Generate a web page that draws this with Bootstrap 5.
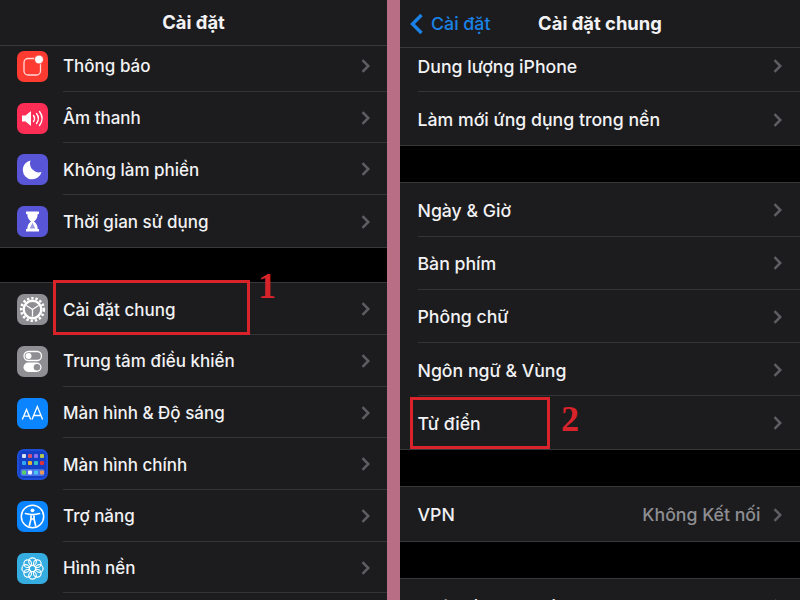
<!DOCTYPE html>
<html lang="vi">
<head>
    <meta charset="UTF-8">
    <title>Cài đặt</title>
    <link rel="stylesheet" href="https://cdn.jsdelivr.net/npm/bootstrap@5.3.0/dist/css/bootstrap.min.css">
    <style>
        html, body { width: 800px; height: 600px; overflow: hidden; background: #000; }
        body { font-family: Inter, "Liberation Sans", sans-serif; font-size: 17px; font-weight: 450; color: #f2f2f4; }
        .screen { width: 800px; height: 600px; position: relative; overflow: hidden; }
        .pane-left { width: 387px; height: 600px; overflow: hidden; }
        .pane-gap { width: 13px; background: #b86f85; }
        .pane-right { width: 400px; height: 600px; overflow: hidden; font-size: 17.7px; }
        .head-bar { position: relative; z-index: 1; background: #1c1c1e; border-bottom: 1px solid #38383a; font-size: 18.4px; font-weight: 700; }
        .head-left { height: 46px; padding-top: 1px; }
        .head-right { height: 48px; }
        .scroll-left { margin-top: -6px; }
        .scroll-right { margin-top: -9px; }
        .back-link { position: absolute; left: 9px; top: 11px; color: #1a82e6; font-size: 17.8px; font-weight: 450; display: flex; align-items: center; gap: 7px; }
        .set-group { background: #1c1c1e; border-bottom: 1px solid #38383a; }
        .set-group.with-top { border-top: 1px solid #38383a; }
        .set-row { height: 51.7px; padding-left: 16.5px; }
        .set-row .row-body { height: 100%; margin-left: 15.5px; padding-right: 17.5px; padding-top: 1.5px; border-bottom: 1px solid #343436; }
        .set-row .row-body > span { padding-top: 2px; }
        .set-row:last-child .row-body { border-bottom: 0; }
        .tall-row { height: 53.2px; padding-left: 0; }
        .tall-row .row-body { margin-left: 17.5px; padding-right: 18.5px; }
        .app-ico { width: 31px; height: 31px; border-radius: 7px; flex: none; display: block; margin-top: 1.5px; }
        .chev { width: 9px; height: 14px; flex: none; }
        .row-value { color: #8e8e93; margin-right: 12px; }
        .left-gap { height: 34.5px; }
        .right-gap { height: 36px; }
        .mark-box { position: absolute; border: 3px solid #d9232b; }
        .mark-num { position: absolute; font-family: "Liberation Serif", serif; font-weight: 700; font-size: 36px; line-height: 1; color: #d9232b; }
    </style>
</head>
<body>
<svg width="0" height="0" class="position-absolute">
    <symbol id="chev" viewBox="0 0 9 14"><path d="M1.500 1.200 7.300 7l-5.800 5.800" fill="none" stroke="#5e5e62" stroke-width="2.500"/></symbol>
</svg>
<div class="screen d-flex">
    <div class="pane-left">
        <div class="head-bar head-left d-flex align-items-center justify-content-center">Cài đặt</div>
        <div class="scroll-left">
        <div class="set-group">
            <div class="set-row d-flex align-items-center">
                <svg class="app-ico" viewBox="0 0 31 31"><rect width="31" height="31" fill="#fe3b30"/><rect x="7" y="7.500" width="16.500" height="16.500" rx="4" fill="none" stroke="#fff" stroke-opacity=".8" stroke-width="1.300"/><circle cx="22" cy="8.500" r="4.500" fill="#fff" stroke="#fe3b30" stroke-width="1"/></svg>
                <div class="row-body flex-grow-1 d-flex align-items-center justify-content-between"><span>Thông báo</span><svg class="chev"><use href="#chev"/></svg></div>
            </div>
            <div class="set-row d-flex align-items-center">
                <svg class="app-ico" viewBox="0 0 31 31"><rect width="31" height="31" fill="#fd2d55"/><path d="M5 12.500h3.500L14 8v15l-5.500-4.500H5z" fill="#fff"/><path d="M16.500 12.500c1.300 1.800 1.300 4.200 0 6M19.500 10.500c2.300 3 2.300 7 0 10M22.500 8.500c3.200 4.300 3.200 9.700 0 14" fill="none" stroke="#fff" stroke-width="1.400" stroke-linecap="round"/></svg>
                <div class="row-body flex-grow-1 d-flex align-items-center justify-content-between"><span>Âm thanh</span><svg class="chev"><use href="#chev"/></svg></div>
            </div>
            <div class="set-row d-flex align-items-center">
                <svg class="app-ico" viewBox="0 0 31 31"><rect width="31" height="31" fill="#5856d6"/><path d="M13.500 6.500A9.500 9.500 0 1 0 24.500 18 9 9 0 0 1 13.500 6.500z" fill="#fff"/></svg>
                <div class="row-body flex-grow-1 d-flex align-items-center justify-content-between"><span>Không làm phiền</span><svg class="chev"><use href="#chev"/></svg></div>
            </div>
            <div class="set-row d-flex align-items-center">
                <svg class="app-ico" viewBox="0 0 31 31"><rect width="31" height="31" fill="#5856d6"/><path d="M9 5.500h13v2.600h-1.300c0 3.200-1.200 5.500-3.700 7.400 2.500 1.900 3.700 4.200 3.700 7.400H22v2.600H9v-2.600h1.300c0-3.200 1.200-5.500 3.700-7.400-2.500-1.900-3.700-4.200-3.700-7.400H9z" fill="#fff"/><path d="M15.500 16.500c-.4 1.800-1.600 3.300-2.800 6h5.600c-1.200-2.700-2.400-4.200-2.800-6z" fill="#9a99e4"/></svg>
                <div class="row-body flex-grow-1 d-flex align-items-center justify-content-between"><span>Thời gian sử dụng</span><svg class="chev"><use href="#chev"/></svg></div>
            </div>
        </div>
        <div class="left-gap"></div>
        <div class="set-group with-top">
            <div class="set-row d-flex align-items-center">
                <svg class="app-ico" viewBox="0 0 31 31"><rect width="31" height="31" fill="#8e8e93"/><circle cx="15.500" cy="15.500" r="11.300" fill="none" stroke="#fff" stroke-width="2.600" stroke-dasharray="2.400 1.900"/><circle cx="15.500" cy="15.500" r="8.800" fill="none" stroke="#fff" stroke-width="2.400"/><path d="M15.500 15.500 9.500 11.500M15.500 15.500 21.500 11.500M15.500 15.500V22.500" stroke="#fff" stroke-width="1.300"/></svg>
                <div class="row-body flex-grow-1 d-flex align-items-center justify-content-between"><span>Cài đặt chung</span><svg class="chev"><use href="#chev"/></svg></div>
            </div>
            <div class="set-row d-flex align-items-center">
                <svg class="app-ico" viewBox="0 0 31 31"><rect width="31" height="31" fill="#8e8e93"/><rect x="7" y="5.500" width="17.500" height="9" rx="4.500" fill="none" stroke="#fff" stroke-width="1.300"/><circle cx="11.500" cy="10" r="3" fill="#fff"/><rect x="6.500" y="16.500" width="18" height="9.500" rx="4.750" fill="#fff"/><circle cx="20" cy="21.200" r="3.300" fill="#8e8e93"/></svg>
                <div class="row-body flex-grow-1 d-flex align-items-center justify-content-between"><span>Trung tâm điều khiển</span><svg class="chev"><use href="#chev"/></svg></div>
            </div>
            <div class="set-row d-flex align-items-center">
                <svg class="app-ico" viewBox="0 0 31 31"><rect width="31" height="31" fill="#0a84ff"/><path d="M5.300 21.500 9.500 11.500l4.200 10M6.800 18.200h5.400M15 21.500l5.300-13 5.300 13M17 17.500h6.600" fill="none" stroke="#fff" stroke-width="1.300"/></svg>
                <div class="row-body flex-grow-1 d-flex align-items-center justify-content-between"><span>Màn hình &amp; Độ sáng</span><svg class="chev"><use href="#chev"/></svg></div>
            </div>
            <div class="set-row d-flex align-items-center">
                <svg class="app-ico" viewBox="0 0 31 31"><rect width="31" height="31" fill="#1d4ed8"/><rect x="2" y="2" width="27" height="27" rx="5" fill="#1440c8"/><rect x="5" y="5" width="4" height="4" rx="1" fill="#d8e0f0"/><rect x="11" y="5" width="4" height="4" rx="1" fill="#d8506c"/><rect x="17" y="5" width="4" height="4" rx="1" fill="#8a70f0"/><rect x="23" y="5" width="4" height="4" rx="1" fill="#b0c850"/><rect x="5" y="12" width="4" height="4" rx="1" fill="#30a8f0"/><rect x="11" y="12" width="4" height="4" rx="1" fill="#e8b030"/><rect x="17" y="12" width="4" height="4" rx="1" fill="#30c0c8"/><rect x="23" y="12" width="4" height="4" rx="1" fill="#e03040"/><rect x="3.500" y="20" width="24" height="7" rx="2" fill="#4a73e8"/><rect x="5" y="21.500" width="4" height="4" rx="1" fill="#58d068"/><rect x="11" y="21.500" width="4" height="4" rx="1" fill="#f0f4ff"/><rect x="17" y="21.500" width="4" height="4" rx="1" fill="#48c8f0"/><rect x="23" y="21.500" width="4" height="4" rx="1" fill="#e89858"/></svg>
                <div class="row-body flex-grow-1 d-flex align-items-center justify-content-between"><span>Màn hình chính</span><svg class="chev"><use href="#chev"/></svg></div>
            </div>
            <div class="set-row d-flex align-items-center">
                <svg class="app-ico" viewBox="0 0 31 31"><rect width="31" height="31" fill="#0a84ff"/><circle cx="15.500" cy="15.500" r="11.200" fill="none" stroke="#fff" stroke-width="1.500"/><circle cx="15.500" cy="9.300" r="1.900" fill="#fff"/><path d="M8.500 12.500c2.500.8 4.500 1.100 7 1.100s4.500-.3 7-1.100M14 13.600v4.400l-1.600 6.500M17 13.600v4.400l1.600 6.500M14.300 18h2.400" fill="none" stroke="#fff" stroke-width="1.700" stroke-linecap="round"/></svg>
                <div class="row-body flex-grow-1 d-flex align-items-center justify-content-between"><span>Trợ năng</span><svg class="chev"><use href="#chev"/></svg></div>
            </div>
            <div class="set-row d-flex align-items-center">
                <svg class="app-ico" viewBox="0 0 31 31"><rect width="31" height="31" fill="#35ade0"/><g fill="none" stroke="#fff" stroke-width="1.200"><circle cx="15.500" cy="8.700" r="3.800"/><circle cx="15.500" cy="22.300" r="3.800"/><circle cx="8.700" cy="15.500" r="3.800"/><circle cx="22.300" cy="15.500" r="3.800"/><circle cx="10.700" cy="10.700" r="3.800"/><circle cx="20.300" cy="10.700" r="3.800"/><circle cx="10.700" cy="20.300" r="3.800"/><circle cx="20.300" cy="20.300" r="3.800"/><circle cx="15.500" cy="15.500" r="3.200"/></g></svg>
                <div class="row-body flex-grow-1 d-flex align-items-center justify-content-between"><span>Hình nền</span><svg class="chev"><use href="#chev"/></svg></div>
            </div>
            <div class="set-row d-flex align-items-center"><div class="row-body flex-grow-1"></div></div>
        </div>
        </div>
    </div>
    <div class="pane-gap"></div>
    <div class="pane-right">
        <div class="head-bar head-right d-flex align-items-center justify-content-center">
            <div class="back-link">
                <svg width="15" height="22" viewBox="0 0 15 22"><path d="M12.500 2 3.500 11l9 9" fill="none" stroke="#1a82e6" stroke-width="3.400"/></svg>
                <span>Cài đặt</span>
            </div>
            <span>Cài đặt chung</span>
        </div>
        <div class="scroll-right">
        <div class="set-group">
            <div class="set-row tall-row d-flex align-items-center">
                <div class="row-body flex-grow-1 d-flex align-items-center justify-content-between"><span>Dung lượng iPhone</span><svg class="chev"><use href="#chev"/></svg></div>
            </div>
            <div class="set-row tall-row d-flex align-items-center">
                <div class="row-body flex-grow-1 d-flex align-items-center justify-content-between"><span>Làm mới ứng dụng trong nền</span><svg class="chev"><use href="#chev"/></svg></div>
            </div>
        </div>
        <div class="right-gap"></div>
        <div class="set-group with-top">
            <div class="set-row tall-row d-flex align-items-center">
                <div class="row-body flex-grow-1 d-flex align-items-center justify-content-between"><span>Ngày &amp; Giờ</span><svg class="chev"><use href="#chev"/></svg></div>
            </div>
            <div class="set-row tall-row d-flex align-items-center">
                <div class="row-body flex-grow-1 d-flex align-items-center justify-content-between"><span>Bàn phím</span><svg class="chev"><use href="#chev"/></svg></div>
            </div>
            <div class="set-row tall-row d-flex align-items-center">
                <div class="row-body flex-grow-1 d-flex align-items-center justify-content-between"><span>Phông chữ</span><svg class="chev"><use href="#chev"/></svg></div>
            </div>
            <div class="set-row tall-row d-flex align-items-center">
                <div class="row-body flex-grow-1 d-flex align-items-center justify-content-between"><span>Ngôn ngữ &amp; Vùng</span><svg class="chev"><use href="#chev"/></svg></div>
            </div>
            <div class="set-row tall-row d-flex align-items-center">
                <div class="row-body flex-grow-1 d-flex align-items-center justify-content-between"><span>Từ điển</span><svg class="chev"><use href="#chev"/></svg></div>
            </div>
        </div>
        <div class="right-gap"></div>
        <div class="set-group with-top">
            <div class="set-row tall-row d-flex align-items-center">
                <div class="row-body flex-grow-1 d-flex align-items-center"><span class="me-auto">VPN</span><span class="row-value">Không Kết nối</span><svg class="chev"><use href="#chev"/></svg></div>
            </div>
        </div>
        <div class="right-gap"></div>
        <div class="set-group with-top">
            <div class="set-row tall-row d-flex align-items-center">
                <div class="row-body flex-grow-1 d-flex align-items-center justify-content-between"><span>Pháp lý &amp; Quy định</span><svg class="chev"><use href="#chev"/></svg></div>
            </div>
        </div>
        </div>
    </div>
    <div class="mark-box" style="left:53px;top:280px;width:197px;height:55px"></div>
    <div class="mark-num" style="left:258px;top:268px">1</div>
    <div class="mark-box" style="left:410px;top:397px;width:140px;height:52px"></div>
    <div class="mark-num" style="left:561px;top:401px">2</div>
</div>
<script src="https://cdn.jsdelivr.net/npm/bootstrap@5.3.0/dist/js/bootstrap.bundle.min.js"></script>
</body>
</html>
